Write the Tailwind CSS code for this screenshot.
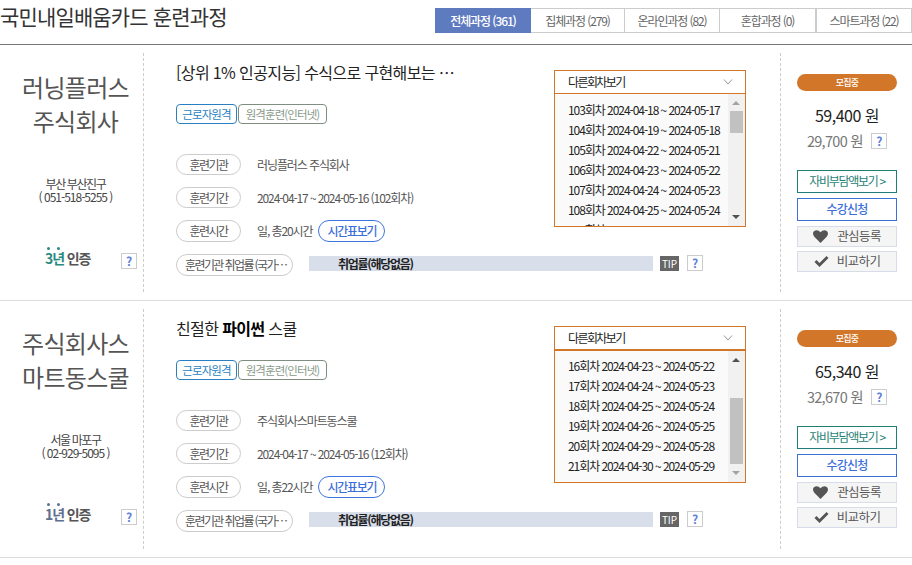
<!DOCTYPE html>
<html lang="ko">
  <head>
    <meta charset="UTF-8" />
    <meta name="viewport" content="width=device-width, initial-scale=1.0" />
    <script src="https://cdn.jsdelivr.net/npm/@tailwindcss/browser@4"></script>
    <title>국민내일배움카드 훈련과정</title>
  </head>
  <body class="w-[912px] h-[565px] overflow-hidden bg-white font-['Noto_Sans_CJK_KR','Noto_Sans',sans-serif] text-[#333]">
    <!-- header -->
    <header class="flex h-[45px] border-b border-[#777]">
      <h1 class="w-[435px] pt-px text-[21px] leading-[30px] tracking-[-0.85px] text-[#333]">국민내일배움카드 훈련과정</h1>
      <nav class="flex h-[25px] mt-2 text-[12px] leading-[23px] tracking-[-1.1px] text-[#666] text-center">
        <a class="w-[96px] bg-[#5f7bbf] text-white font-medium leading-[25px]">전체과정 (361)</a>
        <a class="w-[94px] border border-l-0 border-[#ccc]">집체과정 (279)</a>
        <a class="w-[95px] border border-l-0 border-[#ccc]">온라인과정 (82)</a>
        <a class="w-[96px] border border-l-0 border-[#ccc]">혼합과정 (0)</a>
        <a class="w-[96px] border border-[#ccc]">스마트과정 (22)</a>
      </nav>
    </header>

    <!-- card 1 -->
    <section class="flex h-[256px] py-2 border-b border-[#ddd]">
      <div class="w-[144px] shrink-0 pl-2 border-r border-dashed border-[#ccc] text-center">
        <p class="pt-[17px] text-[24px] leading-[34px] tracking-[-0.7px] text-[#555]">러닝플러스<br />주식회사</p>
        <p class="mt-[39px] text-[12px] leading-[13px] tracking-[-1px] text-[#444]"><span class="tracking-[-1.4px]">부산 부산진구</span><br />( 051-518-5255 )</p>
        <div class="flex items-start mt-[50px] -ml-2 pl-[45px]">
          <p class="relative w-[76px] -mt-[5px] text-left text-[14px] leading-[20px] font-bold tracking-[-1.1px] text-[#555]">
            <span class="absolute left-[2px] -top-px w-[3px] h-[3px] rounded-full bg-[#2a8a80]"></span>
            <span class="absolute left-[12px] -top-px w-[3px] h-[3px] rounded-full bg-[#2a8a80]"></span>
            <span class="text-[#2a8a80]">3년</span> 인증
          </p>
          <span class="w-[16px] h-[16px] border border-[#ccc] text-center text-[12px] leading-[14px] font-bold text-[#5f82d8]">?</span>
        </div>
      </div>

      <div class="w-[637px] shrink-0 pl-8 border-r border-dashed border-[#ccc]">
        <div class="flex h-[193px]">
          <div class="w-[378px]">
            <h2 class="pt-[7px] text-[16px] leading-[24px] tracking-[-0.62px] text-[#222]">[상위 1% 인공지능] 수식으로 구현해보는 …</h2>
            <div class="flex gap-px mt-5 text-[11.5px] leading-[18px] tracking-[-0.9px]">
              <span class="w-[61px] h-[20px] text-center border border-[#2a7fc0] rounded-[4px] text-[#2a7fc0]">근로자원격</span>
              <span class="w-[89px] h-[20px] text-center border border-[#7f8f7f] rounded-[4px] text-[#8a9a8a]">원격훈련(인터넷)</span>
            </div>
            <div class="flex items-center mt-[30px] h-[21px] text-[12px] tracking-[-1.1px] text-[#555]">
              <span class="w-[65px] h-[21px] mr-4 text-center leading-[19px] tracking-[-1.6px] border border-[#ccc] rounded-full">훈련기관</span>
              러닝플러스 주식회사
            </div>
            <div class="flex items-center mt-3 h-[21px] text-[12px] tracking-[-1.1px] text-[#555]">
              <span class="w-[65px] h-[21px] mr-4 text-center leading-[20px] tracking-[-1.6px] border border-[#ccc] rounded-full">훈련기간</span>
              2024-04-17 ~ 2024-05-16 (102회차)
            </div>
            <div class="flex items-center mt-3 h-[22px] text-[12px] tracking-[-1.1px] text-[#555]">
              <span class="w-[65px] h-[22px] mr-4 text-center leading-[20px] tracking-[-1.6px] border border-[#ccc] rounded-full">훈련시간</span>
              일, 총20시간
              <span class="w-[67px] h-[22px] ml-[6px] text-center leading-[19px] font-medium tracking-[-1.3px] border border-[#3d74e0] rounded-full text-[#3d6fd9]">시간표보기</span>
            </div>
          </div>
          <div class="flex flex-col w-[192px] h-[157px] mt-[17px] border border-[#d2762a]">
            <div class="flex items-center justify-between h-[23px] shrink-0 pl-[13px] pr-[12px] border-b border-[#d2762a] text-[12px] tracking-[-1.6px] text-[#222]">
              다른회차보기
              <svg width="10" height="6" viewBox="0 0 10 6" fill="none" stroke="#999" stroke-width="1"><path d="M1 .5l4 4.500 4-4.500" /></svg>
            </div>
            <div class="flex flex-1 overflow-hidden bg-[#fafafa]">
              <ul class="flex-1 min-w-0 pt-[6px] pl-[13px] text-[12px] leading-[20px] tracking-[-1.05px] text-[#222] whitespace-nowrap">
                <li>103회차 2024-04-18 ~ 2024-05-17</li>
                <li>104회차 2024-04-19 ~ 2024-05-18</li>
                <li>105회차 2024-04-22 ~ 2024-05-21</li>
                <li>106회차 2024-04-23 ~ 2024-05-22</li>
                <li>107회차 2024-04-24 ~ 2024-05-23</li>
                <li>108회차 2024-04-25 ~ 2024-05-24</li>
                <li>109회차 2024-04-26 ~ 2024-05-25</li>
              </ul>
              <div class="relative w-[17px] shrink-0 bg-[#f1f1f1]">
                <svg class="absolute left-[4px] top-[7px]" width="8" height="4" viewBox="0 0 8 4"><path d="M4 0l4 4H0z" fill="#a3a3a3" /></svg>
                <div class="absolute left-[2px] top-[17px] w-[13px] h-[22px] bg-[#c1c1c1]"></div>
                <svg class="absolute left-[4px] bottom-[7px]" width="8" height="4" viewBox="0 0 8 4"><path d="M0 0h8L4 4z" fill="#505050" /></svg>
              </div>
            </div>
          </div>
        </div>
        <div class="flex items-start h-[22px] mt-[8px]">
          <span class="w-[117px] h-[22px] mr-4 pl-2 overflow-hidden whitespace-nowrap text-[12px] leading-[20px] tracking-[-1.6px] text-[#555] border border-[#ccc] rounded-full">훈련기관 취업률 (국가…</span>
          <div class="w-[344px] h-[15px] mt-[2px] pl-[29px] bg-[#d8deea] text-[12px] leading-[15px] font-bold tracking-[-1.3px] text-[#222]">취업률(해당없음)</div>
          <span class="w-[19px] h-[15px] mt-[2px] ml-[7px] bg-[#666] text-center text-[10px] leading-[15px] text-white">TIP</span>
          <span class="w-[16px] h-[16px] mt-px ml-2 border border-[#ccc] text-center text-[12px] leading-[14px] font-bold text-[#5f82d8]">?</span>
        </div>
      </div>

      <div class="w-[115px] shrink-0 ml-4">
        <div class="w-[100px] h-[17px] mt-[21px] rounded-full bg-[#d2762a] text-center text-[9px] leading-[17px] font-medium tracking-[-0.8px] text-white">모집중</div>
        <p class="mt-[11px] text-center w-[100px] text-[16px] leading-[26px] tracking-[-0.5px] text-[#222]">59,400 원</p>
        <div class="flex items-center h-[26px] text-[14.5px] tracking-[-0.7px] text-[#777]">
          <span class="w-[66px] text-right">29,700 원</span>
          <span class="w-[16px] h-[16px] ml-[8px] border border-[#ccc] text-center text-[12px] leading-[14px] font-bold text-[#5f82d8]">?</span>
        </div>
        <div class="flex flex-col w-[100px] mt-[16px] text-center text-[12.5px] tracking-[-0.6px]">
          <a class="h-[23px] border border-[#1f7f75] leading-[20px] text-[12px] text-[#1f7f75] tracking-[-1.3px]">자비부담액보기 &gt;</a>
          <a class="h-[23px] mt-[5px] border border-[#3d6fd9] leading-[20px] text-[12px] font-medium text-[#3d6fd9] tracking-[-0.8px]">수강신청</a>
          <a class="flex items-center justify-center gap-[9px] h-[21px] mt-[5px] border border-[#d8dce8] bg-[#f5f5f5] text-[#555]">
            <svg width="15" height="13" viewBox="0 0 14 12"><path d="M7 12L1.200 6.200C-.4 4.500-.4 2 1.200.8 2.900-.4 5.400 0 7 2c1.600-2 4.100-2.400 5.800-1.200 1.600 1.200 1.600 3.700 0 5.400z" fill="#555" /></svg>
            관심등록
          </a>
          <a class="flex items-center justify-center gap-[8px] h-[21px] mt-[4px] border border-[#d8dce8] bg-[#f5f5f5] text-[#555]">
            <svg width="15" height="11" viewBox="0 0 14 11"><path d="M0 6l2-2 3 3 7-7 2 2-9 9z" fill="#555" /></svg>
            비교하기
          </a>
        </div>
      </div>
    </section>

    <!-- card 2 -->
    <section class="flex h-[257px] py-2 border-b border-[#ddd]">
      <div class="w-[144px] shrink-0 pl-2 border-r border-dashed border-[#ccc] text-center">
        <p class="pt-[17px] text-[24px] leading-[34px] tracking-[-0.7px] text-[#555]">주식회사스<br />마트동스쿨</p>
        <p class="mt-[39px] text-[12px] leading-[13px] tracking-[-1px] text-[#444]"><span class="tracking-[-1.4px]">서울 마포구</span><br />( 02-929-5095 )</p>
        <div class="flex items-start mt-[50px] -ml-2 pl-[45px]">
          <p class="relative w-[76px] -mt-[5px] text-left text-[14px] leading-[20px] font-bold tracking-[-1.1px] text-[#555]">
            <span class="absolute left-[2px] -top-px w-[3px] h-[3px] rounded-full bg-[#5f6f8f]"></span>
            <span class="absolute left-[12px] -top-px w-[3px] h-[3px] rounded-full bg-[#5f6f8f]"></span>
            <span class="text-[#5f6f8f]">1년</span> 인증
          </p>
          <span class="w-[16px] h-[16px] border border-[#ccc] text-center text-[12px] leading-[14px] font-bold text-[#5f82d8]">?</span>
        </div>
      </div>

      <div class="w-[637px] shrink-0 pl-8 border-r border-dashed border-[#ccc]">
        <div class="flex h-[193px]">
          <div class="w-[378px]">
            <h2 class="pt-[7px] text-[16px] leading-[24px] tracking-[-0.62px] text-[#222]">친절한 <b class="font-bold text-black">파이썬</b> 스쿨</h2>
            <div class="flex gap-px mt-5 text-[11.5px] leading-[18px] tracking-[-0.9px]">
              <span class="w-[61px] h-[20px] text-center border border-[#2a7fc0] rounded-[4px] text-[#2a7fc0]">근로자원격</span>
              <span class="w-[89px] h-[20px] text-center border border-[#7f8f7f] rounded-[4px] text-[#8a9a8a]">원격훈련(인터넷)</span>
            </div>
            <div class="flex items-center mt-[30px] h-[21px] text-[12px] tracking-[-1.1px] text-[#555]">
              <span class="w-[65px] h-[21px] mr-4 text-center leading-[19px] tracking-[-1.6px] border border-[#ccc] rounded-full">훈련기관</span>
              주식회사스마트동스쿨
            </div>
            <div class="flex items-center mt-3 h-[21px] text-[12px] tracking-[-1.1px] text-[#555]">
              <span class="w-[65px] h-[21px] mr-4 text-center leading-[20px] tracking-[-1.6px] border border-[#ccc] rounded-full">훈련기간</span>
              2024-04-17 ~ 2024-05-16 (12회차)
            </div>
            <div class="flex items-center mt-3 h-[22px] text-[12px] tracking-[-1.1px] text-[#555]">
              <span class="w-[65px] h-[22px] mr-4 text-center leading-[20px] tracking-[-1.6px] border border-[#ccc] rounded-full">훈련시간</span>
              일, 총22시간
              <span class="w-[67px] h-[22px] ml-[6px] text-center leading-[19px] font-medium tracking-[-1.3px] border border-[#3d74e0] rounded-full text-[#3d6fd9]">시간표보기</span>
            </div>
          </div>
          <div class="flex flex-col w-[192px] h-[157px] mt-[17px] border border-[#d2762a]">
            <div class="flex items-center justify-between h-[24px] shrink-0 pl-[13px] pr-[12px] pb-px border-b-2 border-[#d2762a] text-[12px] tracking-[-1.6px] text-[#222]">
              다른회차보기
              <svg width="10" height="6" viewBox="0 0 10 6" fill="none" stroke="#999" stroke-width="1"><path d="M1 .5l4 4.500 4-4.500" /></svg>
            </div>
            <div class="flex flex-1 overflow-hidden bg-[#fafafa]">
              <ul class="flex-1 min-w-0 pt-[5px] pl-[13px] text-[12px] leading-[20px] tracking-[-1.05px] text-[#222] whitespace-nowrap">
                <li>16회차 2024-04-23 ~ 2024-05-22</li>
                <li>17회차 2024-04-24 ~ 2024-05-23</li>
                <li>18회차 2024-04-25 ~ 2024-05-24</li>
                <li>19회차 2024-04-26 ~ 2024-05-25</li>
                <li>20회차 2024-04-29 ~ 2024-05-28</li>
                <li>21회차 2024-04-30 ~ 2024-05-29</li>
              </ul>
              <div class="relative w-[17px] shrink-0 bg-[#f1f1f1]">
                <svg class="absolute left-[4px] top-[7px]" width="8" height="4" viewBox="0 0 8 4"><path d="M4 0l4 4H0z" fill="#505050" /></svg>
                <div class="absolute left-[2px] top-[47px] w-[13px] h-[66px] bg-[#c1c1c1]"></div>
                <svg class="absolute left-[4px] bottom-[7px]" width="8" height="4" viewBox="0 0 8 4"><path d="M0 0h8L4 4z" fill="#a3a3a3" /></svg>
              </div>
            </div>
          </div>
        </div>
        <div class="flex items-start h-[22px] mt-[8px]">
          <span class="w-[117px] h-[22px] mr-4 pl-2 overflow-hidden whitespace-nowrap text-[12px] leading-[20px] tracking-[-1.6px] text-[#555] border border-[#ccc] rounded-full">훈련기관 취업률 (국가…</span>
          <div class="w-[344px] h-[15px] mt-[2px] pl-[29px] bg-[#d8deea] text-[12px] leading-[15px] font-bold tracking-[-1.3px] text-[#222]">취업률(해당없음)</div>
          <span class="w-[19px] h-[15px] mt-[2px] ml-[7px] bg-[#666] text-center text-[10px] leading-[15px] text-white">TIP</span>
          <span class="w-[16px] h-[16px] mt-px ml-2 border border-[#ccc] text-center text-[12px] leading-[14px] font-bold text-[#5f82d8]">?</span>
        </div>
      </div>

      <div class="w-[115px] shrink-0 ml-4">
        <div class="w-[100px] h-[17px] mt-[21px] rounded-full bg-[#d2762a] text-center text-[9px] leading-[17px] font-medium tracking-[-0.8px] text-white">모집중</div>
        <p class="mt-[11px] text-center w-[100px] text-[16px] leading-[26px] tracking-[-0.5px] text-[#222]">65,340 원</p>
        <div class="flex items-center h-[26px] text-[14.5px] tracking-[-0.7px] text-[#777]">
          <span class="w-[66px] text-right">32,670 원</span>
          <span class="w-[16px] h-[16px] ml-[8px] border border-[#ccc] text-center text-[12px] leading-[14px] font-bold text-[#5f82d8]">?</span>
        </div>
        <div class="flex flex-col w-[100px] mt-[16px] text-center text-[12.5px] tracking-[-0.6px]">
          <a class="h-[23px] border border-[#1f7f75] leading-[20px] text-[12px] text-[#1f7f75] tracking-[-1.3px]">자비부담액보기 &gt;</a>
          <a class="h-[23px] mt-[5px] border border-[#3d6fd9] leading-[20px] text-[12px] font-medium text-[#3d6fd9] tracking-[-0.8px]">수강신청</a>
          <a class="flex items-center justify-center gap-[9px] h-[21px] mt-[5px] border border-[#d8dce8] bg-[#f5f5f5] text-[#555]">
            <svg width="15" height="13" viewBox="0 0 14 12"><path d="M7 12L1.200 6.200C-.4 4.500-.4 2 1.200.8 2.900-.4 5.400 0 7 2c1.600-2 4.100-2.400 5.800-1.200 1.600 1.200 1.600 3.700 0 5.400z" fill="#555" /></svg>
            관심등록
          </a>
          <a class="flex items-center justify-center gap-[8px] h-[21px] mt-[4px] border border-[#d8dce8] bg-[#f5f5f5] text-[#555]">
            <svg width="15" height="11" viewBox="0 0 14 11"><path d="M0 6l2-2 3 3 7-7 2 2-9 9z" fill="#555" /></svg>
            비교하기
          </a>
        </div>
      </div>
    </section>
  </body>
</html>
